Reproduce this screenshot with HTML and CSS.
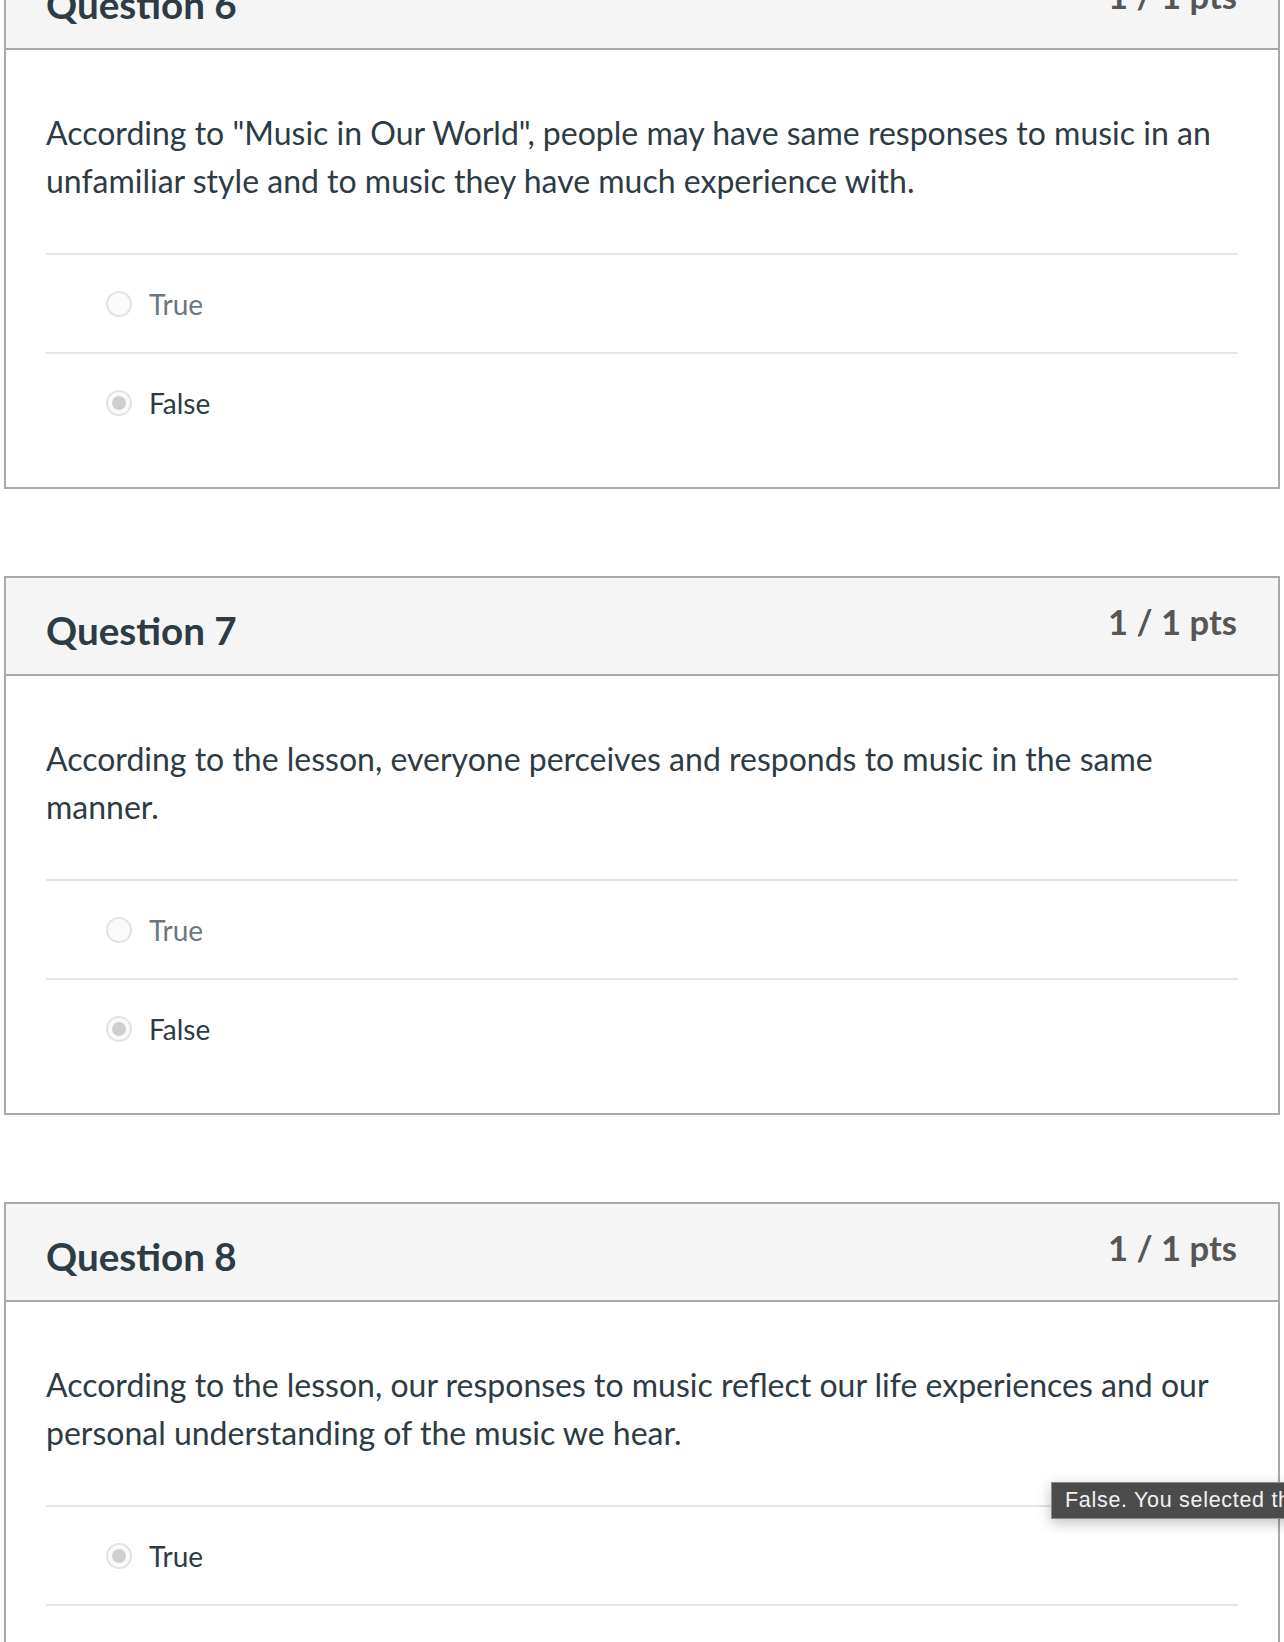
FILE: index.html
```html
<!DOCTYPE html>
<html lang="en">
<head>
<meta charset="utf-8">
<title>Quiz results</title>
<link rel="stylesheet" href="styles.css">
</head>
<body>
<div class="page">
  <section class="card">
    <header class="card-header">
      <h2 class="q-title">Question 6</h2>
      <div class="q-pts">1 / 1 pts</div>
    </header>
    <div class="card-body">
      <p class="q-text">According to "Music in Our World", people may have same responses to music in an unfamiliar style and to music they have much experience with.</p>
      <div class="answers">
        <div class="answer"><span class="radio"></span><span class="label">True</span></div>
        <div class="answer selected"><span class="radio"></span><span class="label">False</span></div>
      </div>
    </div>
  </section>

  <section class="card">
    <header class="card-header">
      <h2 class="q-title">Question 7</h2>
      <div class="q-pts">1 / 1 pts</div>
    </header>
    <div class="card-body">
      <p class="q-text">According to the lesson, everyone perceives and responds to music in the same manner.</p>
      <div class="answers">
        <div class="answer"><span class="radio"></span><span class="label">True</span></div>
        <div class="answer selected"><span class="radio"></span><span class="label">False</span></div>
      </div>
    </div>
  </section>

  <section class="card has-tip">
    <header class="card-header">
      <h2 class="q-title">Question 8</h2>
      <div class="q-pts">1 / 1 pts</div>
    </header>
    <div class="card-body">
      <p class="q-text">According to the lesson, our responses to music reflect our life experiences and our personal understanding of the music we hear.</p>
      <div class="answers">
        <div class="answer selected"><span class="radio"></span><span class="label">True</span></div>
        <div class="answer"><span class="radio"></span><span class="label">False</span></div>
      </div>
    </div>
    <div class="tooltip">False. You selected the correct answer.</div>
  </section>
</div>
</body>
</html>
```

FILE: styles.css
```css
html, body {
  margin: 0;
  padding: 0;
  background: #ffffff;
  overflow: hidden;
}

body {
  font-family: Lato, "Open Sans", "Liberation Sans", sans-serif;
  color: #2d3b45;
}

.page {
  margin-top: -50px;
  padding: 0 4px;
  display: flex;
  flex-direction: column;
  gap: 87px;
}

.card {
  border: 2px solid #a9a9a9;
  background: #ffffff;
  position: relative;
}

.card-header {
  height: 96px;
  background: #f5f5f5;
  border-bottom: 2px solid #a9a9a9;
  display: flex;
  justify-content: space-between;
  align-items: flex-start;
  padding: 0 41px 0 40px;
}

.q-title {
  margin: 29px 0 0;
  font-size: 38.6px;
  line-height: 46px;
  font-weight: 700;
  color: #2d3b45;
}

.q-pts {
  margin-top: 24px;
  font-size: 34.6px;
  line-height: 40px;
  font-weight: 700;
  color: #565656;
}

.card-body {
  padding: 59px 40px 36px;
}

.q-text {
  margin: 0 0 48px;
  font-size: 32px;
  line-height: 48px;
  color: #2d3b45;
}

.answer {
  height: 97px;
  border-top: 2px solid #e4e4e4;
  display: flex;
  align-items: center;
  padding-left: 60px;
}

.radio {
  width: 22px;
  height: 22px;
  border-radius: 50%;
  border: 2px solid #e2e2e2;
  background: #fafafa;
  margin-right: 17px;
  position: relative;
  flex: none;
}

.selected .radio::after {
  content: "";
  position: absolute;
  left: 4px;
  top: 4px;
  width: 14px;
  height: 14px;
  border-radius: 50%;
  background: #cfcfcf;
}

.label {
  font-size: 28px;
  line-height: 34px;
  color: #6b7780;
}

.selected .label {
  color: #2d3b45;
}

.tooltip {
  position: absolute;
  left: 1045px;
  top: 278px;
  height: 35px;
  padding: 0 13px;
  background: #4b4b4b;
  border: 1px solid #8e8e8e;
  color: #f2f2f2;
  font-family: "Liberation Sans", Arial, sans-serif;
  font-size: 21.5px;
  line-height: 35px;
  white-space: nowrap;
  box-shadow: 0 4px 14px rgba(0, 0, 0, 0.25);
  letter-spacing: 0.7px;
}
```
